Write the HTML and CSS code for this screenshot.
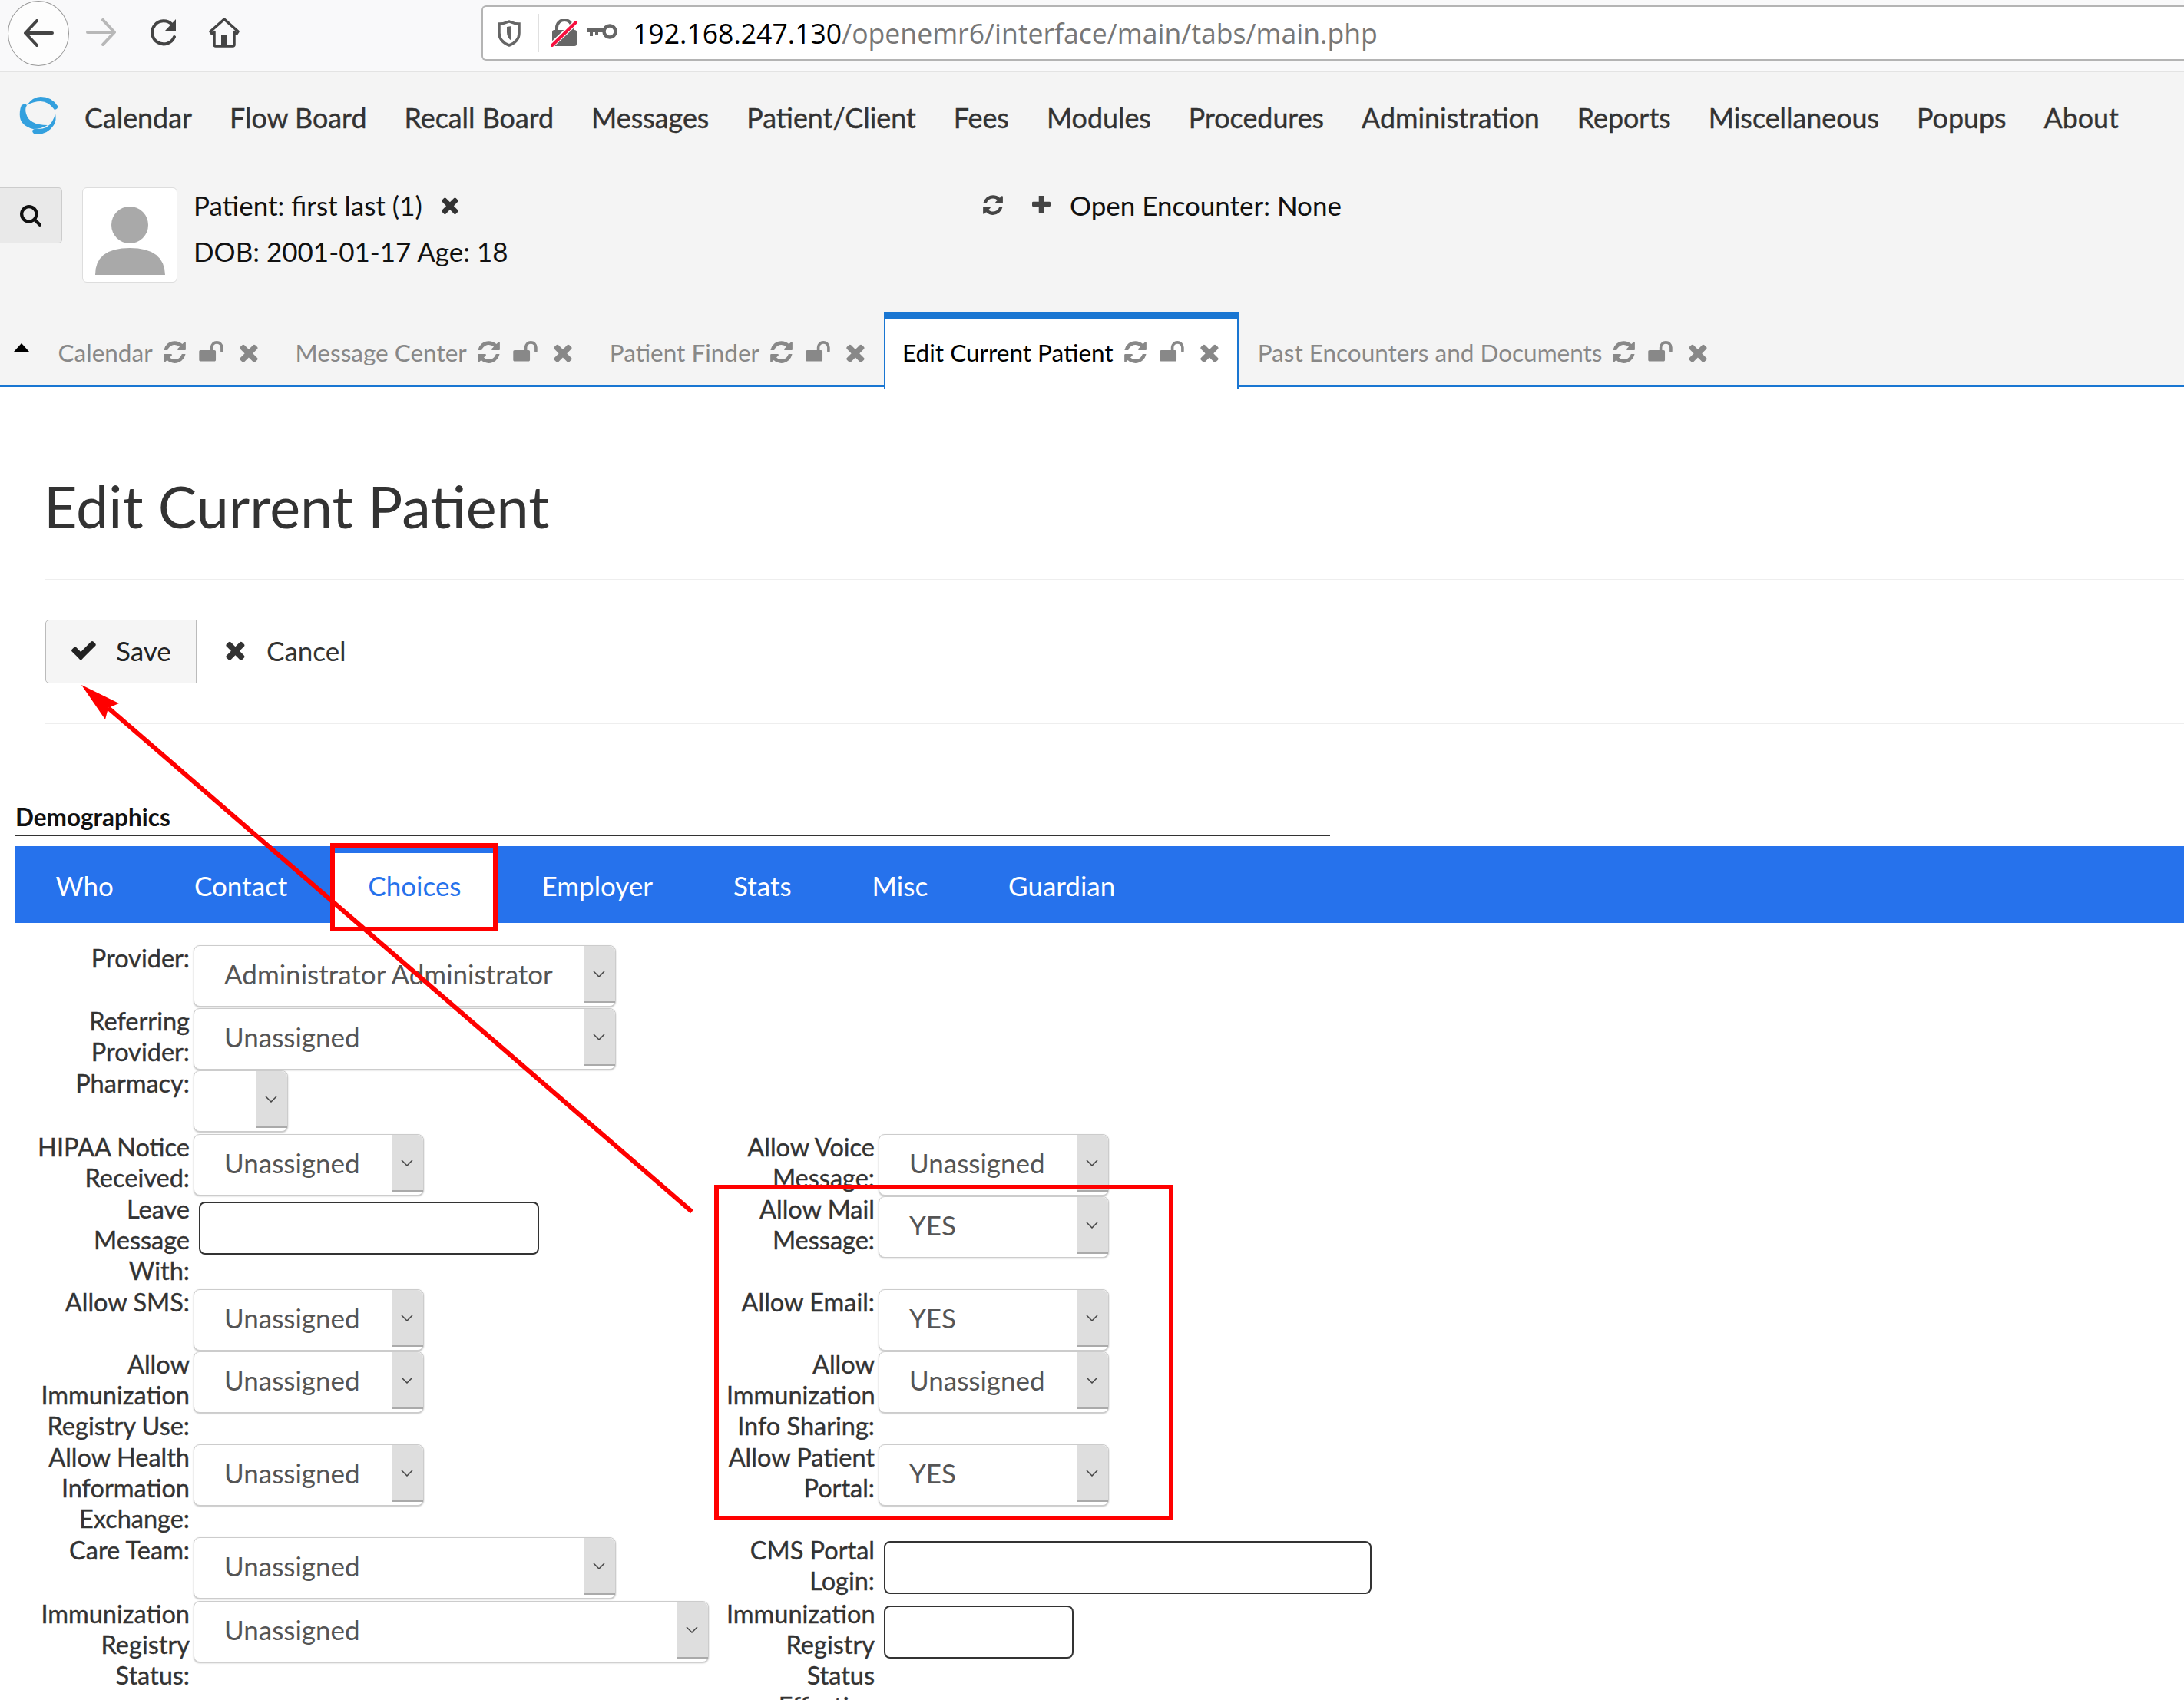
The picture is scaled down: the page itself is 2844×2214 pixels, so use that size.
FILE: index.html
```html
<!DOCTYPE html>
<html lang="en">
<head>
  <meta charset="UTF-8">
  <title>OpenEMR - Edit Current Patient</title>
  <link rel="stylesheet" href="styles.css">
</head>
<body>

<svg class="sprites" width="0" height="0">
  <symbol id="i-times" viewBox="300 230 1200 1330"><path d="M1490 1322q0 40-28 68l-136 136q-28 28-68 28t-68-28l-294-294-294 294q-28 28-68 28t-68-28l-136-136q-28-28-28-68t28-68l294-294-294-294q-28-28-28-68t28-68l136-136q28-28 68-28t68 28l294 294 294-294q28-28 68-28t68 28l136 136q28 28 28 68t-28 68l-294 294 294 294q28 28 28 68z"/></symbol>
  <symbol id="i-check" viewBox="120 240 1560 1320"><path d="M1671 566q0 40-28 68l-724 724-136 136q-28 28-68 28t-68-28l-136-136-362-362q-28-28-28-68t28-68l136-136q28-28 68-28t68 28l294 295 656-657q28-28 68-28t68 28l136 136q28 28 28 68z"/></symbol>
  <symbol id="i-refresh" viewBox="120 120 1550 1550"><path d="M1639 1056q0 5-1 7-64 268-268 434.500t-478 166.500q-146 0-282.500-55t-243.500-157l-129 129q-19 19-45 19t-45-19-19-45v-448q0-26 19-45t45-19h448q26 0 45 19t19 45-19 45l-137 137q71 66 161 102t187 36q134 0 250-65t186-179q11-17 53-117 8-23 30-23h192q13 0 22.500 9.500t9.500 22.500zm25-800v448q0 26-19 45t-45 19h-448q-26 0-45-19t-19-45 19-45l138-138q-148-137-349-137-134 0-250 65t-186 179q-11 17-53 117-8 23-30 23h-199q-13 0-22.500-9.500t-9.500-22.500v-7q65-268 270-434.500t480-166.500q146 0 284 55.500t245 156.500l130-129q19-19 45-19t45 19 19 45z"/></symbol>
  <symbol id="i-unlock" viewBox="64 128 1664 1536"><path d="M1728 576v256q0 26-19 45t-45 19h-64q-26 0-45-19t-19-45v-256q0-106-75-181t-181-75-181 75-75 181v192h96q40 0 68 28t28 68v576q0 40-28 68t-68 28h-960q-40 0-68-28t-28-68v-576q0-40 28-68t68-28h672v-192q0-185 131.500-316.500t316.500-131.500 316.500 131.500 131.500 316.500z"/></symbol>
  <symbol id="i-plus" viewBox="192 192 1408 1408"><path d="M1600 736v192q0 40-28 68t-68 28h-416v416q0 40-28 68t-68 28h-192q-40 0-68-28t-28-68v-416h-416q-40 0-68-28t-28-68v-192q0-40 28-68t68-28h416v-416q0-40 28-68t68-28h192q40 0 68 28t28 68v416h416q40 0 68 28t28 68z"/></symbol>
  <symbol id="i-search" viewBox="64 128 1664 1664"><path d="M1216 832q0-185-131.500-316.500t-316.500-131.500-316.500 131.500-131.500 316.500 131.500 316.500 316.500 131.500 316.500-131.500 131.500-316.500zm512 832q0 52-38 90t-90 38q-54 0-90-38l-343-342q-179 124-399 124-143 0-273.500-55.500t-225-150-150-225-55.500-273.500 55.500-273.500 150-225 225-150 273.500-55.500 273.500 55.500 225 150 150 225 55.500 273.500q0 220-124 399l343 343q37 37 37 90z"/></symbol>
  <symbol id="i-chevron" viewBox="0 0 16 9"><path d="M1 1l7 7 7-7" fill="none" stroke="#444" stroke-width="1.5"/></symbol>
</svg>

<!-- browser bar -->
<div class="browser-bar">
  <div class="back-btn">
    <svg width="40" height="36" viewBox="0 0 40 36"><path d="M18 2L3 18l15 16M4 18h34" fill="none" stroke="#444" stroke-width="4" stroke-linecap="round" stroke-linejoin="round"/></svg>
  </div>
  <svg class="forward-ic" width="40" height="36" viewBox="0 0 40 36"><path d="M22 2l15 16-15 16M36 18H2" fill="none" stroke="#b8b8b8" stroke-width="4" stroke-linecap="round" stroke-linejoin="round"/></svg>
  <svg class="reload-ic" width="38" height="36" viewBox="0 0 38 36"><path d="M29 8a15 15 0 1 0 3 16" fill="none" stroke="#444" stroke-width="4" stroke-linecap="round"/><path d="M34 1v15H20z" fill="#444"/></svg>
  <svg class="home-ic" width="40" height="40" viewBox="0 0 40 40"><path d="M20 3L2 19l2 3 3-2.500V36q0 2 2 2h22q2 0 2-2V19.500l3 2.500 2-3z" fill="none" stroke="#444" stroke-width="3.500" stroke-linejoin="round"/><path d="M16 38V24h8v14z" fill="#444"/></svg>
  <div class="url-box">
    <svg class="shield-ic" width="30" height="35" viewBox="0 0 30 35"><path d="M15 2q7 3 13 3v12q0 11-13 16Q2 28 2 17V5q6 0 13-3z" fill="none" stroke="#666" stroke-width="3.500"/><path d="M15 8v19q-6-4-6-11V9z" fill="#666" transform="translate(3 0)"/></svg>
    <span class="url-sep"></span>
    <svg class="lock-ic" width="36" height="36" viewBox="0 0 36 36"><path d="M8 14v-3a10 10 0 0 1 20 0v3" fill="none" stroke="#666" stroke-width="4"/><rect x="2" y="14" width="32" height="21" rx="3" fill="#666"/><path d="M0 35L34 3" stroke="#fff" stroke-width="7"/><path d="M2 34L33 4" stroke="#f6103e" stroke-width="4" stroke-linecap="round"/></svg>
    <svg class="key-ic" width="40" height="20" viewBox="0 0 40 20"><circle cx="29" cy="10" r="7.500" fill="none" stroke="#666" stroke-width="4.500"/><path d="M0 6h22v5H14v4h-4v-4H7v5H3v-5H0z" fill="#666"/></svg>
    <span class="url-text"><span class="url-host">192.168.247.130</span>/openemr6/interface/main/tabs/main.php</span>
  </div>
</div>

<!-- app header -->
<div class="app-head">
  <div class="main-nav">
    <svg class="logo" width="60" height="60" viewBox="20 20 60 60">
      <path d="M35 37Q43 26 53 26q14 0 22 12 1 4-4 5-8-11-18-11-9 0-18 5z" fill="#33a0de"/>
      <path d="M28 37q5-3 7 0-3 5-1 11 4 15 28 15-8 5-19 5-15-4-17-15-1-9 2-16z" fill="#33a0de"/>
      <path d="M72 48q2 9-2 15-7 11-21 12-7 0-7-5 2-3 7-2 14 0 19-10 3-5 4-10z" fill="#33a0de"/>
    </svg>
    <a>Calendar</a>
    <a>Flow Board</a>
    <a>Recall Board</a>
    <a>Messages</a>
    <a>Patient/Client</a>
    <a>Fees</a>
    <a>Modules</a>
    <a>Procedures</a>
    <a>Administration</a>
    <a>Reports</a>
    <a>Miscellaneous</a>
    <a>Popups</a>
    <a>About</a>
  </div>

  <div class="patient-row">
    <div class="search-btn"><svg class="ic"><use href="#i-search"/></svg></div>
    <div class="avatar">
      <svg width="124" height="124" viewBox="0 0 124 124"><circle cx="61" cy="48" r="24" fill="#a9a9a9"/><path d="M16 113q0-35 45-35t46 35z" fill="#a9a9a9"/></svg>
    </div>
    <div class="patient-info">
      <div class="patient-line">Patient: first last (1) <svg class="ic ic-close"><use href="#i-times"/></svg></div>
      <div class="patient-line">DOB: 2001-01-17 Age: 18</div>
    </div>
    <div class="encounter">
      <svg class="ic ic-sync"><use href="#i-refresh"/></svg>
      <svg class="ic ic-plus"><use href="#i-plus"/></svg>
      <span>Open Encounter: None</span>
    </div>
  </div>

  <div class="tab-bar">
    <span class="tab-caret"></span>
    <div class="tab">Calendar <svg class="ic t-sync"><use href="#i-refresh"/></svg><svg class="ic t-lock"><use href="#i-unlock"/></svg><svg class="ic t-close"><use href="#i-times"/></svg></div>
    <div class="tab">Message Center <svg class="ic t-sync"><use href="#i-refresh"/></svg><svg class="ic t-lock"><use href="#i-unlock"/></svg><svg class="ic t-close"><use href="#i-times"/></svg></div>
    <div class="tab">Patient Finder <svg class="ic t-sync"><use href="#i-refresh"/></svg><svg class="ic t-lock"><use href="#i-unlock"/></svg><svg class="ic t-close"><use href="#i-times"/></svg></div>
    <div class="tab tab-active">Edit Current Patient <svg class="ic t-sync"><use href="#i-refresh"/></svg><svg class="ic t-lock"><use href="#i-unlock"/></svg><svg class="ic t-close"><use href="#i-times"/></svg></div>
    <div class="tab">Past Encounters and Documents <svg class="ic t-sync"><use href="#i-refresh"/></svg><svg class="ic t-lock"><use href="#i-unlock"/></svg><svg class="ic t-close"><use href="#i-times"/></svg></div>
  </div>
</div>

<!-- page -->
<div class="page-top">
  <h1>Edit Current Patient</h1>
  <hr>
  <div class="actions">
    <div class="btn-save"><svg class="ic"><use href="#i-check"/></svg>Save</div>
    <div class="btn-cancel"><svg class="ic"><use href="#i-times"/></svg>Cancel</div>
  </div>
  <hr>
</div>

<div class="demo-title">Demographics</div>

<div class="demo-tabs">
  <a>Who</a>
  <a>Contact</a>
  <a class="current">Choices</a>
  <a>Employer</a>
  <a>Stats</a>
  <a>Misc</a>
  <a>Guardian</a>
</div>

<div class="form-grid">
  <label>Provider:</label>
  <div class="field pad-2"><div class="sel w-lg"><span>Administrator Administrator</span><i><svg class="chev"><use href="#i-chevron"/></svg></i></div></div>
  <label></label><div class="field"></div>

  <label>Referring<br>Provider:</label>
  <div class="field"><div class="sel w-lg"><span>Unassigned</span><i><svg class="chev"><use href="#i-chevron"/></svg></i></div></div>
  <label></label><div class="field"></div>

  <label>Pharmacy:</label>
  <div class="field pad-3"><div class="sel w-xs"><span></span><i><svg class="chev"><use href="#i-chevron"/></svg></i></div></div>
  <label></label><div class="field"></div>

  <label>HIPAA Notice<br>Received:</label>
  <div class="field"><div class="sel w-sm"><span>Unassigned</span><i><svg class="chev"><use href="#i-chevron"/></svg></i></div></div>
  <label>Allow Voice<br>Message:</label>
  <div class="field"><div class="sel w-sm"><span>Unassigned</span><i><svg class="chev"><use href="#i-chevron"/></svg></i></div></div>

  <label>Leave<br>Message<br>With:</label>
  <div class="field"><input class="txt txt-leave" type="text"></div>
  <label>Allow Mail<br>Message:</label>
  <div class="field"><div class="sel w-sm"><span>YES</span><i><svg class="chev"><use href="#i-chevron"/></svg></i></div></div>

  <label>Allow SMS:</label>
  <div class="field"><div class="sel w-sm"><span>Unassigned</span><i><svg class="chev"><use href="#i-chevron"/></svg></i></div></div>
  <label>Allow Email:</label>
  <div class="field"><div class="sel w-sm"><span>YES</span><i><svg class="chev"><use href="#i-chevron"/></svg></i></div></div>

  <label>Allow<br>Immunization<br>Registry Use:</label>
  <div class="field"><div class="sel w-sm"><span>Unassigned</span><i><svg class="chev"><use href="#i-chevron"/></svg></i></div></div>
  <label>Allow<br>Immunization<br>Info Sharing:</label>
  <div class="field"><div class="sel w-sm"><span>Unassigned</span><i><svg class="chev"><use href="#i-chevron"/></svg></i></div></div>

  <label>Allow Health<br>Information<br>Exchange:</label>
  <div class="field"><div class="sel w-sm"><span>Unassigned</span><i><svg class="chev"><use href="#i-chevron"/></svg></i></div></div>
  <label>Allow Patient<br>Portal:</label>
  <div class="field"><div class="sel w-sm"><span>YES</span><i><svg class="chev"><use href="#i-chevron"/></svg></i></div></div>

  <label>Care Team:</label>
  <div class="field"><div class="sel w-lg"><span>Unassigned</span><i><svg class="chev"><use href="#i-chevron"/></svg></i></div></div>
  <label>CMS Portal<br>Login:</label>
  <div class="field"><input class="txt txt-cms" type="text"></div>

  <label>Immunization<br>Registry<br>Status:</label>
  <div class="field"><div class="sel w-xl"><span>Unassigned</span><i><svg class="chev"><use href="#i-chevron"/></svg></i></div></div>
  <label>Immunization<br>Registry<br>Status<br>Effective</label>
  <div class="field"><input class="txt txt-date" type="text"></div>
</div>

<!-- red annotation drawn over the screenshot -->
<svg class="markup" width="2844" height="2214" viewBox="0 0 2844 2214">
  <path d="M141 922L901 1578" stroke="#f00" stroke-width="6" fill="none"/>
  <path d="M106 892l49 24-14 6-4 15z" fill="#f00"/>
  <rect x="433" y="1101" width="212" height="109" fill="none" stroke="#f00" stroke-width="6"/>
  <rect x="933" y="1546" width="592" height="431" fill="none" stroke="#f00" stroke-width="6"/>
</svg>

</body>
</html>
```

FILE: styles.css
```css
html, body {
  margin: 0;
  padding: 0;
}
body {
  position: relative;
  width: 2844px;
  height: 2214px;
  overflow: hidden;
  background-color: #fff;
  font-family: Lato, "Open Sans", sans-serif;
  color: #333;
}
.sprites {
  position: absolute;
}
.ic {
  display: block;
  flex: none;
  fill: currentColor;
}

/* browser bar */
.browser-bar {
  display: flex;
  align-items: center;
  height: 92px;
  border-bottom: 2px solid #e3e3e3;
  background-color: #f9f9fa;
  box-sizing: content-box;
}
.back-btn {
  display: flex;
  align-items: center;
  justify-content: center;
  flex: none;
  width: 80px;
  height: 85px;
  margin: -6px 0 0 10px;
  border: 1px solid #999;
  border-radius: 50%;
  background-color: #fdfdfd;
  box-sizing: border-box;
}
.forward-ic {
  flex: none;
  margin: -8px 0 0 22px;
}
.reload-ic {
  flex: none;
  margin: -8px 0 0 43px;
}
.home-ic {
  flex: none;
  margin: -8px 0 0 39px;
}
.url-box {
  display: flex;
  align-items: center;
  flex: none;
  width: 2240px;
  height: 72px;
  margin: -6px 0 0 315px;
  padding-left: 19px;
  border: 2px solid #b4b4b4;
  border-right: none;
  border-radius: 6px 0 0 6px;
  background-color: #fff;
  box-sizing: border-box;
}
.shield-ic {
  flex: none;
}
.url-sep {
  width: 2px;
  height: 50px;
  margin: 0 15px 0 22px;
  background-color: #e0e0e0;
}
.lock-ic {
  flex: none;
}
.key-ic {
  flex: none;
  margin: -4px 0 0 12px;
}
.url-text {
  margin-left: 19px;
  font-family: "Open Sans", sans-serif;
  font-size: 35.600px;
  color: #777;
  white-space: nowrap;
}
.url-host {
  color: #000;
}

/* app header */
.app-head {
  height: 408px;
  border-bottom: 2px solid #1976d2;
  background-color: #f4f4f4;
}
.main-nav {
  display: flex;
  align-items: center;
  height: 122px;
}
.logo {
  flex: none;
  margin: -10px 30px 0 20px;
}
.main-nav a {
  margin: 0 49px 3px 0;
  font-size: 35.850px;
  color: #333;
  white-space: nowrap;
  -webkit-text-stroke: .4px #333;
}
.patient-row {
  display: flex;
  align-items: flex-start;
  height: 125px;
  margin-top: 28px;
  font-size: 35px;
  color: #111;
}
.search-btn {
  display: flex;
  align-items: center;
  justify-content: center;
  width: 81px;
  height: 73px;
  border: 1px solid #ccc;
  border-left: none;
  border-radius: 0 5px 5px 0;
  background-color: #e9e9e9;
  box-sizing: border-box;
  color: #111;
}
.search-btn .ic {
  width: 28px;
  height: 30px;
}
.avatar {
  width: 124px;
  height: 124px;
  margin-left: 26px;
  border: 1px solid #ddd;
  border-radius: 6px;
  background-color: #fff;
  box-sizing: border-box;
}
.patient-info {
  width: 1028px;
  margin: -7px 0 0 21px;
}
.patient-line {
  display: flex;
  align-items: center;
  height: 60px;
  white-space: pre;
}
.ic-close {
  width: 22px;
  height: 24px;
  margin-left: 16px;
  color: #333;
}
.encounter {
  display: flex;
  align-items: center;
  height: 60px;
  margin-top: -7px;
}
.ic-sync {
  width: 26px;
  height: 26px;
  margin-right: 38px;
  color: #444;
}
.ic-plus {
  width: 24px;
  height: 24px;
  margin-right: 25px;
  color: #444;
}

/* open tabs */
.tab-bar {
  display: flex;
  height: 99px;
  margin-top: 37px;
}
.tab-caret {
  flex: none;
  width: 0;
  height: 0;
  margin: 41px 13px 0 18px;
  border-left: 10px solid transparent;
  border-right: 10px solid transparent;
  border-bottom: 11px solid #000;
}
.tab {
  display: flex;
  align-items: center;
  padding: 0 24.500px 4px;
  border-top: 10px solid transparent;
  font-size: 31.500px;
  color: #888;
  white-space: nowrap;
  box-sizing: border-box;
}
.tab .ic {
  color: #888;
}
.t-sync {
  width: 29px;
  height: 29px;
  margin-left: 14px;
}
.t-lock {
  width: 32px;
  height: 29px;
  margin-left: 17px;
}
.t-close {
  width: 24px;
  height: 26px;
  margin-left: 21px;
}
.tab-active {
  position: relative;
  margin-bottom: -2px;
  padding: 0 24.500px 6px 22.500px;
  border-top-color: #1976d2;
  border-left: 2px solid #1976d2;
  border-right: 2px solid #1976d2;
  background-color: #fff;
  color: #000;
}

/* page */
.page-top {
  margin-left: 59px;
}
h1 {
  margin: 105px 0 0 -2px;
  font-size: 75.500px;
  font-weight: 400;
  line-height: 100px;
  color: #333;
}
hr {
  height: 2px;
  margin: 45px 0 0;
  border: none;
  background-color: #eee;
}
.actions {
  display: flex;
  align-items: center;
  margin: 51px 0;
  font-size: 35px;
}
.actions + hr {
  margin: 0;
}
.btn-save {
  display: flex;
  align-items: center;
  width: 197px;
  height: 83px;
  padding: 0 0 4px 33px;
  border: 1px solid #bbb;
  border-radius: 5px 0 0 5px;
  background-color: #f5f5f5;
  box-sizing: border-box;
  color: #222;
}
.btn-save .ic {
  width: 32px;
  height: 27px;
  margin-right: 26px;
}
.btn-cancel {
  display: flex;
  align-items: center;
  margin: 0 0 4px 38px;
}
.btn-cancel .ic {
  width: 25px;
  height: 27px;
  margin-right: 28px;
}
.demo-title {
  width: 1712px;
  height: 43px;
  margin: 101px 0 0 20px;
  border-bottom: 2px solid #333;
  font-size: 31.500px;
  font-weight: 700;
  line-height: 40px;
  color: #111;
}

/* demographics tabs */
.demo-tabs {
  display: flex;
  height: 100px;
  margin: 13px 0 0 20px;
  background-color: #2672ec;
}
.demo-tabs a {
  padding: 10px 52.500px 0;
  font-size: 35px;
  line-height: 82px;
  color: #fff;
}
.demo-tabs a.current {
  margin: 9px 8px 0 4px;
  padding: 1px 44.500px 0 48.500px;
  background-color: #fff;
  color: #2672ec;
}

/* form */
.form-grid {
  display: grid;
  grid-template-columns: 247px 689px 193px 1fr;
  column-gap: 5px;
  margin-top: 29px;
}
.form-grid label {
  margin: -3px 0 4px;
  font-size: 32.500px;
  line-height: 40px;
  text-align: right;
  color: #333;
  -webkit-text-stroke: .4px #333;
}
.field {
  padding-bottom: 1px;
}
.pad-2 {
  padding-bottom: 2px;
}
.pad-3 {
  padding-bottom: 3px;
}
.sel {
  display: flex;
  justify-content: space-between;
  align-items: flex-start;
  height: 80px;
  border: 1px solid #ccc;
  border-radius: 8px;
  background-color: #fff;
  box-shadow: 0 1px 2px rgba(0, 0, 0, .25);
  box-sizing: border-box;
  font-size: 35px;
  color: #555;
}
.sel span {
  padding-left: 39px;
  line-height: 72px;
  white-space: nowrap;
}
.sel i {
  display: flex;
  align-items: center;
  justify-content: center;
  flex: none;
  width: 41px;
  height: 74px;
  padding-right: 3px;
  border-left: 1px solid #aaa;
  border-bottom: 2px solid #aaa;
  border-radius: 0 8px 0 0;
  background-color: #dedede;
  box-sizing: border-box;
}
.chev {
  width: 16px;
  height: 9px;
}
.w-xs {
  width: 123px;
}
.w-sm {
  width: 300px;
}
.w-lg {
  width: 550px;
}
.w-xl {
  width: 671px;
}
.txt {
  display: block;
  height: 69px;
  padding: 0;
  border: 2px solid #333;
  border-radius: 8px;
  background-color: #fff;
  box-sizing: border-box;
}
.txt-leave {
  width: 443px;
  margin: 7px 0 0 7px;
}
.txt-cms {
  width: 635px;
  margin: 5px 0 8px 7px;
}
.txt-date {
  width: 247px;
  margin: 6px 0 0 7px;
}

/* red annotation */
.markup {
  position: absolute;
  top: 0;
  left: 0;
  pointer-events: none;
}
```
